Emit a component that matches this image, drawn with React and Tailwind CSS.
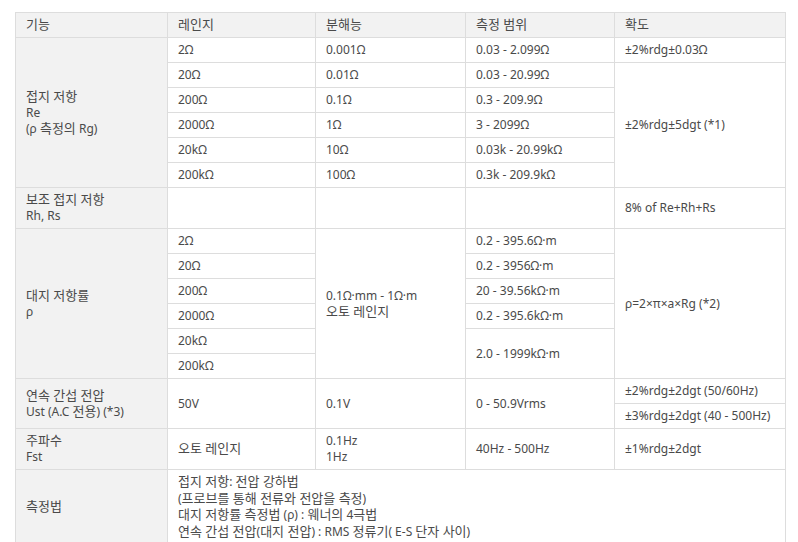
import React from 'react';

const cell = 'border border-[#dddddd] px-[10px] py-1 align-middle';
const head = `${cell} bg-[#f2f2f2] font-normal text-left`;
const label = `${cell} bg-[#f2f2f2]`;

// hangul runs a touch larger to match the reference face
function K({ children }) {
    return <span className="text-[13px] leading-none">{children}</span>;
}

export default function App() {
    return (
        <div className="min-h-screen bg-white pt-3 pl-[15px] text-[12px] leading-4 text-[#4a4a4a]" style={{ fontFamily: '"Noto Sans", "Noto Sans CJK KR", sans-serif' }}>
            <table className="w-[770px] table-fixed border-collapse">
                <colgroup>
                    <col className="w-[152px]" />
                    <col className="w-[148px]" />
                    <col className="w-[150px]" />
                    <col className="w-[149px]" />
                    <col className="w-[171px]" />
                </colgroup>
                <thead>
                    <tr>
                        <th className={head}><K>기능</K></th>
                        <th className={head}><K>레인지</K></th>
                        <th className={head}><K>분해능</K></th>
                        <th className={head}><K>측정 범위</K></th>
                        <th className={head}><K>확도</K></th>
                    </tr>
                </thead>
                <tbody>
                    {/* 접지 저항 */}
                    <tr>
                        <td rowSpan={6} className={label}>
                            <K>접지 저항</K><br />Re<br />(ρ <K>측정의</K> Rg)
                        </td>
                        <td className={cell}>2Ω</td>
                        <td className={cell}>0.001Ω</td>
                        <td className={cell}>0.03 - 2.099Ω</td>
                        <td className={cell}>±2%rdg±0.03Ω</td>
                    </tr>
                    <tr>
                        <td className={cell}>20Ω</td>
                        <td className={cell}>0.01Ω</td>
                        <td className={cell}>0.03 - 20.99Ω</td>
                        <td rowSpan={5} className={cell}>±2%rdg±5dgt (*1)</td>
                    </tr>
                    <tr>
                        <td className={cell}>200Ω</td>
                        <td className={cell}>0.1Ω</td>
                        <td className={cell}>0.3 - 209.9Ω</td>
                    </tr>
                    <tr>
                        <td className={cell}>2000Ω</td>
                        <td className={cell}>1Ω</td>
                        <td className={cell}>3 - 2099Ω</td>
                    </tr>
                    <tr>
                        <td className={cell}>20kΩ</td>
                        <td className={cell}>10Ω</td>
                        <td className={cell}>0.03k - 20.99kΩ</td>
                    </tr>
                    <tr>
                        <td className={cell}>200kΩ</td>
                        <td className={cell}>100Ω</td>
                        <td className={cell}>0.3k - 209.9kΩ</td>
                    </tr>

                    {/* 보조 접지 저항 */}
                    <tr>
                        <td className={label}><K>보조 접지 저항</K><br />Rh, Rs</td>
                        <td className={cell}></td>
                        <td className={cell}></td>
                        <td className={cell}></td>
                        <td className={cell}>8% of Re+Rh+Rs</td>
                    </tr>

                    {/* 대지 저항률 */}
                    <tr>
                        <td rowSpan={6} className={label}><K>대지 저항률</K><br />ρ</td>
                        <td className={cell}>2Ω</td>
                        <td rowSpan={6} className={cell}>0.1Ω·mm - 1Ω·m<br /><K>오토 레인지</K></td>
                        <td className={cell}>0.2 - 395.6Ω·m</td>
                        <td rowSpan={6} className={cell}>ρ=2×π×a×Rg (*2)</td>
                    </tr>
                    <tr>
                        <td className={cell}>20Ω</td>
                        <td className={cell}>0.2 - 3956Ω·m</td>
                    </tr>
                    <tr>
                        <td className={cell}>200Ω</td>
                        <td className={cell}>20 - 39.56kΩ·m</td>
                    </tr>
                    <tr>
                        <td className={cell}>2000Ω</td>
                        <td className={cell}>0.2 - 395.6kΩ·m</td>
                    </tr>
                    <tr>
                        <td className={cell}>20kΩ</td>
                        <td rowSpan={2} className={cell}>2.0 - 1999kΩ·m</td>
                    </tr>
                    <tr>
                        <td className={cell}>200kΩ</td>
                    </tr>

                    {/* 연속 간섭 전압 */}
                    <tr>
                        <td rowSpan={2} className={label}><K>연속 간섭 전압</K><br />Ust (A.C <K>전용</K>) (*3)</td>
                        <td rowSpan={2} className={cell}>50V</td>
                        <td rowSpan={2} className={cell}>0.1V</td>
                        <td rowSpan={2} className={cell}>0 - 50.9Vrms</td>
                        <td className={cell}>±2%rdg±2dgt (50/60Hz)</td>
                    </tr>
                    <tr>
                        <td className={cell}>±3%rdg±2dgt (40 - 500Hz)</td>
                    </tr>

                    {/* 주파수 */}
                    <tr>
                        <td className={label}><K>주파수</K><br />Fst</td>
                        <td className={cell}><K>오토 레인지</K></td>
                        <td className={cell}>0.1Hz<br />1Hz</td>
                        <td className={cell}>40Hz - 500Hz</td>
                        <td className={cell}>±1%rdg±2dgt</td>
                    </tr>

                    {/* 측정법 */}
                    <tr>
                        <td className={label}><K>측정법</K></td>
                        <td colSpan={4} className={`${cell} leading-[16.7px]`}>
                            <K>접지 저항</K>: <K>전압 강하법</K><br />
                            (<K>프로브를 통해 전류와 전압을 측정</K>)<br />
                            <K>대지 저항률 측정법</K> (ρ) : <K>웨너의</K> 4<K>극법</K><br />
                            <K>연속 간섭 전압</K>(<K>대지 전압</K>) : RMS <K>정류기</K>( E-S <K>단자 사이</K>)
                        </td>
                    </tr>
                </tbody>
            </table>
        </div>
    );
}
